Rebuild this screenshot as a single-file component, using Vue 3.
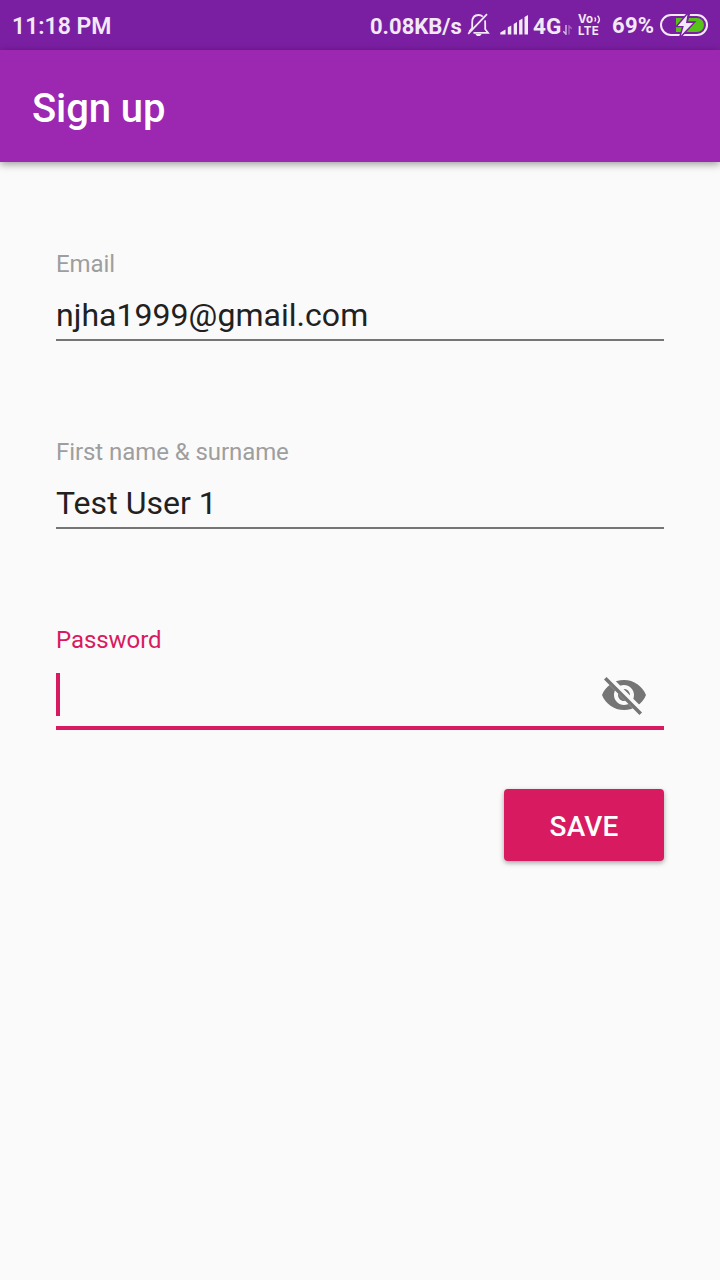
<script setup>
const fields = [
  { label: 'Email', value: 'njha1999@gmail.com' },
  { label: 'First name & surname', value: 'Test User 1' },
]
</script>

<template>
  <div class="screen">
    <div class="status">
      <span class="time">11:18 PM</span>
      <span class="speed">0.08KB/s</span>
      <svg class="bell" width="24" height="26" viewBox="0 0 24 26" fill="none" stroke="#f2e9f6" stroke-width="1.8">
        <path d="M5.2 15V10.5C5.2 5.5 7.5 3 11.5 3C13.2 3 14.7 3.6 15.8 4.6M18 8.4C18.2 9.3 18.2 11 18.2 13V17.2L21 20.8H6.5M5.2 14.5V16L2.2 19.8" />
        <path d="M1.2 21.8L20 2.2" />
        <path d="M8.3 22H14.7L13 24H10Z" fill="#f2e9f6" stroke="none" />
      </svg>
      <svg class="signal" width="28" height="20" viewBox="0 0 28 20" fill="#f2e9f6">
        <path d="M.3 19.5V17.5L5.5 14.6V19.5ZM7.8 12.3L11.3 10.4V19.5H7.8ZM13.7 9L17 7V19.5H13.7ZM19.1 5.6L22.5 3.6V19.5H19.1ZM24.5 2L28 0V19.5H24.5Z" />
      </svg>
      <span class="network">4G</span>
      <svg class="data" width="9" height="10" viewBox="0 0 9 10" fill="none" stroke-width="1.4">
        <path d="M3 0V9.2L.3 6.2" stroke="#d5bce2" />
        <path d="M6 9.5V1L8.7 3.8" stroke="#a568c0" />
      </svg>
      <div class="volte">
        <div class="vo">
          <span>Vo</span>
          <svg width="8" height="9" viewBox="0 0 8 9" fill="none" stroke="#f2e9f6" stroke-width="1.4">
            <path d="M.6 2.6Q2.6 4.5 .6 6.4M3.6 .8Q7.2 4.5 3.6 8.2" />
          </svg>
        </div>
        <span class="lte">LTE</span>
      </div>
      <span class="percent">69%</span>
      <svg class="battery" width="48" height="22" viewBox="0 0 48 22">
        <rect x="1" y="1" width="46" height="20" rx="10" fill="none" stroke="#f2e9f6" stroke-width="2" />
        <path d="M16 4H37A7 7 0 0 1 37 18H16Z" fill="#55c318" />
        <path d="M28.5 -1L17.5 12H23.5L20.5 22.5L33.5 8.5H26.5L29 -1Z" fill="#f2e9f6" stroke="#7b1fa2" stroke-width="2.6" />
        <path d="M27.5 .5L17.8 12H23.8L21 21.5L33 9H26Z" fill="#f2e9f6" />
      </svg>
    </div>

    <header class="bar"><h1>Sign up</h1></header>

    <main class="form">
      <div v-for="f in fields" :key="f.label" class="field">
        <label>{{ f.label }}</label>
        <div class="value">{{ f.value }}</div>
      </div>
      <div class="field active">
        <label>Password</label>
        <div class="value">
          <span class="caret"></span>
          <svg class="eye" width="48" height="48" viewBox="0 0 24 24">
            <defs>
              <clipPath id="strike-gap">
                <path d="M2 4.27L19.73 22L22.27 19.46L4.54 1.73V1H23V23H1V4.27Z" />
              </clipPath>
            </defs>
            <path clip-path="url(#strike-gap)" fill="#757575" fill-rule="evenodd" d="M12 4.5C7 4.5 2.73 7.61 1 12c1.73 4.39 6 7.5 11 7.5s9.27-3.11 11-7.5c-1.73-4.39-6-7.5-11-7.5zM12 17c-2.76 0-5-2.24-5-5s2.24-5 5-5 5 2.24 5 5-2.24 5-5 5zM12 9c-1.66 0-3 1.34-3 3s1.34 3 3 3 3-1.34 3-3-1.34-3-3-3z" />
            <path d="M3.27 4.27L19.74 20.74" fill="none" stroke="#757575" stroke-width="1.8" stroke-linecap="square" />
          </svg>
        </div>
      </div>
      <button class="save" type="button">SAVE</button>
    </main>
  </div>
</template>

<style>
body {
  background: #fafafa;
}
</style>

<style scoped>
.screen {
  height: 1280px;
  background: #fafafa;
  font-family: Roboto, sans-serif;
  overflow: hidden;
}
.status {
  display: flex;
  align-items: flex-start;
  height: 50px;
  box-sizing: border-box;
  padding: 0 12px;
  background: #7b1fa2;
  color: #f2e9f6;
  font-size: 22px;
  font-weight: 700;
  line-height: 53px;
  white-space: nowrap;
}
.status > * {
  flex: none;
}
.time {
  width: 358px;
  font-size: 23px;
  font-weight: 600;
}
.speed {
  width: 97px;
}
.bell {
  margin-top: 12px;
}
.signal {
  margin: 15px 0 0 9px;
}
.network {
  margin-left: 5px;
  width: 30px;
  font-size: 22.5px;
}
.status .data {
  margin-top: 25px;
}
.volte {
  width: 24px;
  margin: 13px 0 0 6px;
  font-family: Inter, sans-serif;
  font-size: 11.5px;
  line-height: 12px;
}
.vo {
  display: flex;
  align-items: center;
  height: 12px;
}
.vo span {
  width: 16px;
}
.lte {
  display: block;
  letter-spacing: 0.3px;
}
.percent {
  width: 48px;
  margin-left: 10px;
  line-height: 51px;
  letter-spacing: 0.3px;
}
.battery {
  margin-top: 14px;
}
.bar {
  position: relative;
  height: 112px;
  box-sizing: border-box;
  padding: 0 32px;
  background: #9c27b0;
  box-shadow: 0 2px 8px rgba(0, 0, 0, 0.4);
}
h1 {
  margin: 0;
  color: #fff;
  font-size: 40px;
  font-weight: 500;
  line-height: 117px;
  letter-spacing: -0.1px;
}
.form {
  display: flex;
  flex-direction: column;
  padding: 88px 56px 0;
}
.field {
  height: 188px;
}
label {
  display: block;
  color: #9e9e9e;
  font-size: 24px;
  line-height: 28px;
  letter-spacing: -0.07px;
}
.value {
  height: 61px;
  border-bottom: 2px solid #757575;
  color: #212121;
  font-size: 32px;
  line-height: 74px;
  letter-spacing: 0.04px;
}
.active {
  height: 163px;
}
.active label {
  color: #d81b60;
}
.active .value {
  display: flex;
  justify-content: space-between;
  height: 76px;
  border-bottom: 4px solid #d81b60;
  margin-top: -4px;
  padding-right: 16px;
}
.caret {
  width: 4px;
  height: 43px;
  margin-top: 23px;
  background: #d81b60;
}
.eye {
  margin-top: 21px;
}
.save {
  align-self: flex-end;
  width: 160px;
  height: 72px;
  padding: 2px 0 0;
  border: 0;
  border-radius: 4px;
  background: #d81b60;
  box-shadow: 0 2px 5px rgba(0, 0, 0, 0.35);
  color: #fff;
  font-family: Roboto, sans-serif;
  font-size: 28px;
  font-weight: 500;
  letter-spacing: 0.15px;
}
</style>
